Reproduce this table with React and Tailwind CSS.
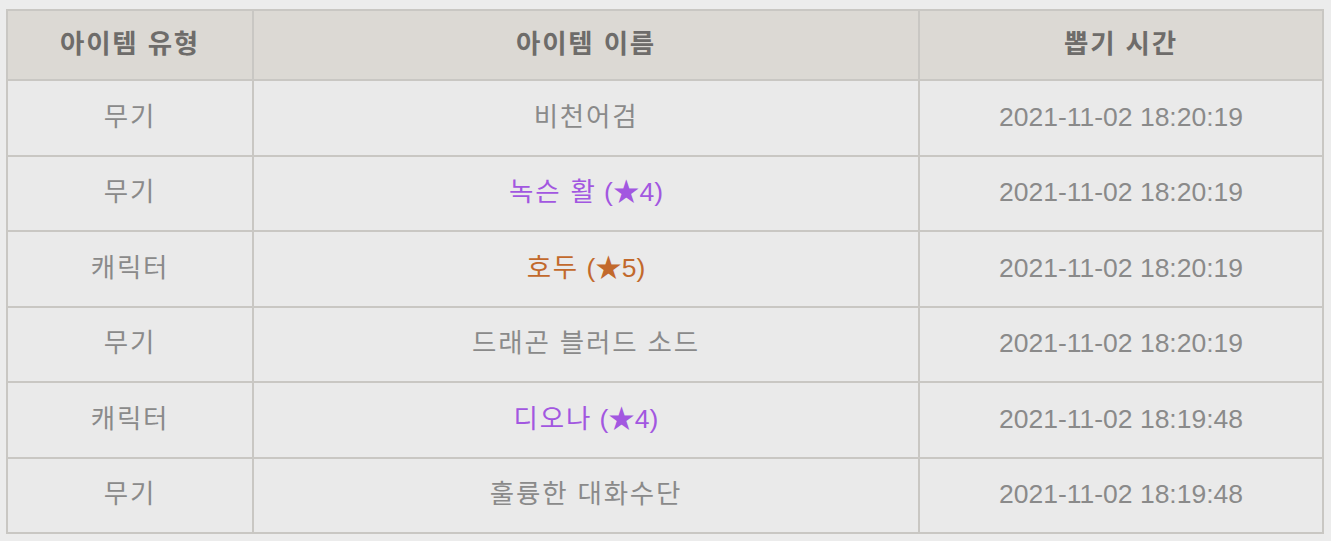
const rows = [
  { type: '무기', name: '비천어검', time: '2021-11-02 18:20:19' },
  { type: '무기', name: '녹슨 활', star: 4, time: '2021-11-02 18:20:19' },
  { type: '캐릭터', name: '호두', star: 5, time: '2021-11-02 18:20:19' },
  { type: '무기', name: '드래곤 블러드 소드', time: '2021-11-02 18:20:19' },
  { type: '캐릭터', name: '디오나', star: 4, time: '2021-11-02 18:19:48' },
  { type: '무기', name: '훌륭한 대화수단', time: '2021-11-02 18:19:48' },
]

function nameClass(star) {
  if (star === 5) return 'text-[#c2692c]'
  if (star === 4) return 'text-[#a257e0]'
  return 'text-[#8a8a8a]'
}

// Hangul in the original renders a little wider than Noto CJK
function Ko({ children }) {
  return <span className="tracking-[1.8px]">{children}</span>
}

export default function App() {
  return (
    <div
      className="min-h-[541px] bg-[#ececec] pt-[9px] pl-[6px]"
      style={{ fontFamily: '"Liberation Sans", "Noto Sans CJK KR", sans-serif' }}
    >
      <table className="w-[1318px] border-collapse border-2 border-[#c9c7c3] text-center text-[26.5px]">
        <thead>
          <tr className="h-[70px] bg-[#dcd9d4] text-[#6e6c6a] font-bold">
            <th className="w-[246px] border-2 border-[#c9c7c3]"><Ko>아이템 유형</Ko></th>
            <th className="w-[666px] border-2 border-[#c9c7c3]"><Ko>아이템 이름</Ko></th>
            <th className="border-2 border-[#c9c7c3]"><Ko>뽑기 시간</Ko></th>
          </tr>
        </thead>
        <tbody>
          {rows.map((r, i) => (
            <tr key={i} className="h-[75.5px] bg-[#eaeaea] text-[#8a8a8a]">
              <td className="border-2 border-[#c9c7c3]"><Ko>{r.type}</Ko></td>
              <td className={`border-2 border-[#c9c7c3] ${nameClass(r.star)}`}>
                <Ko>{r.name}</Ko>
                {r.star ? ` (★${r.star})` : ''}
              </td>
              <td className="border-2 border-[#c9c7c3]">{r.time}</td>
            </tr>
          ))}
        </tbody>
      </table>
    </div>
  )
}
